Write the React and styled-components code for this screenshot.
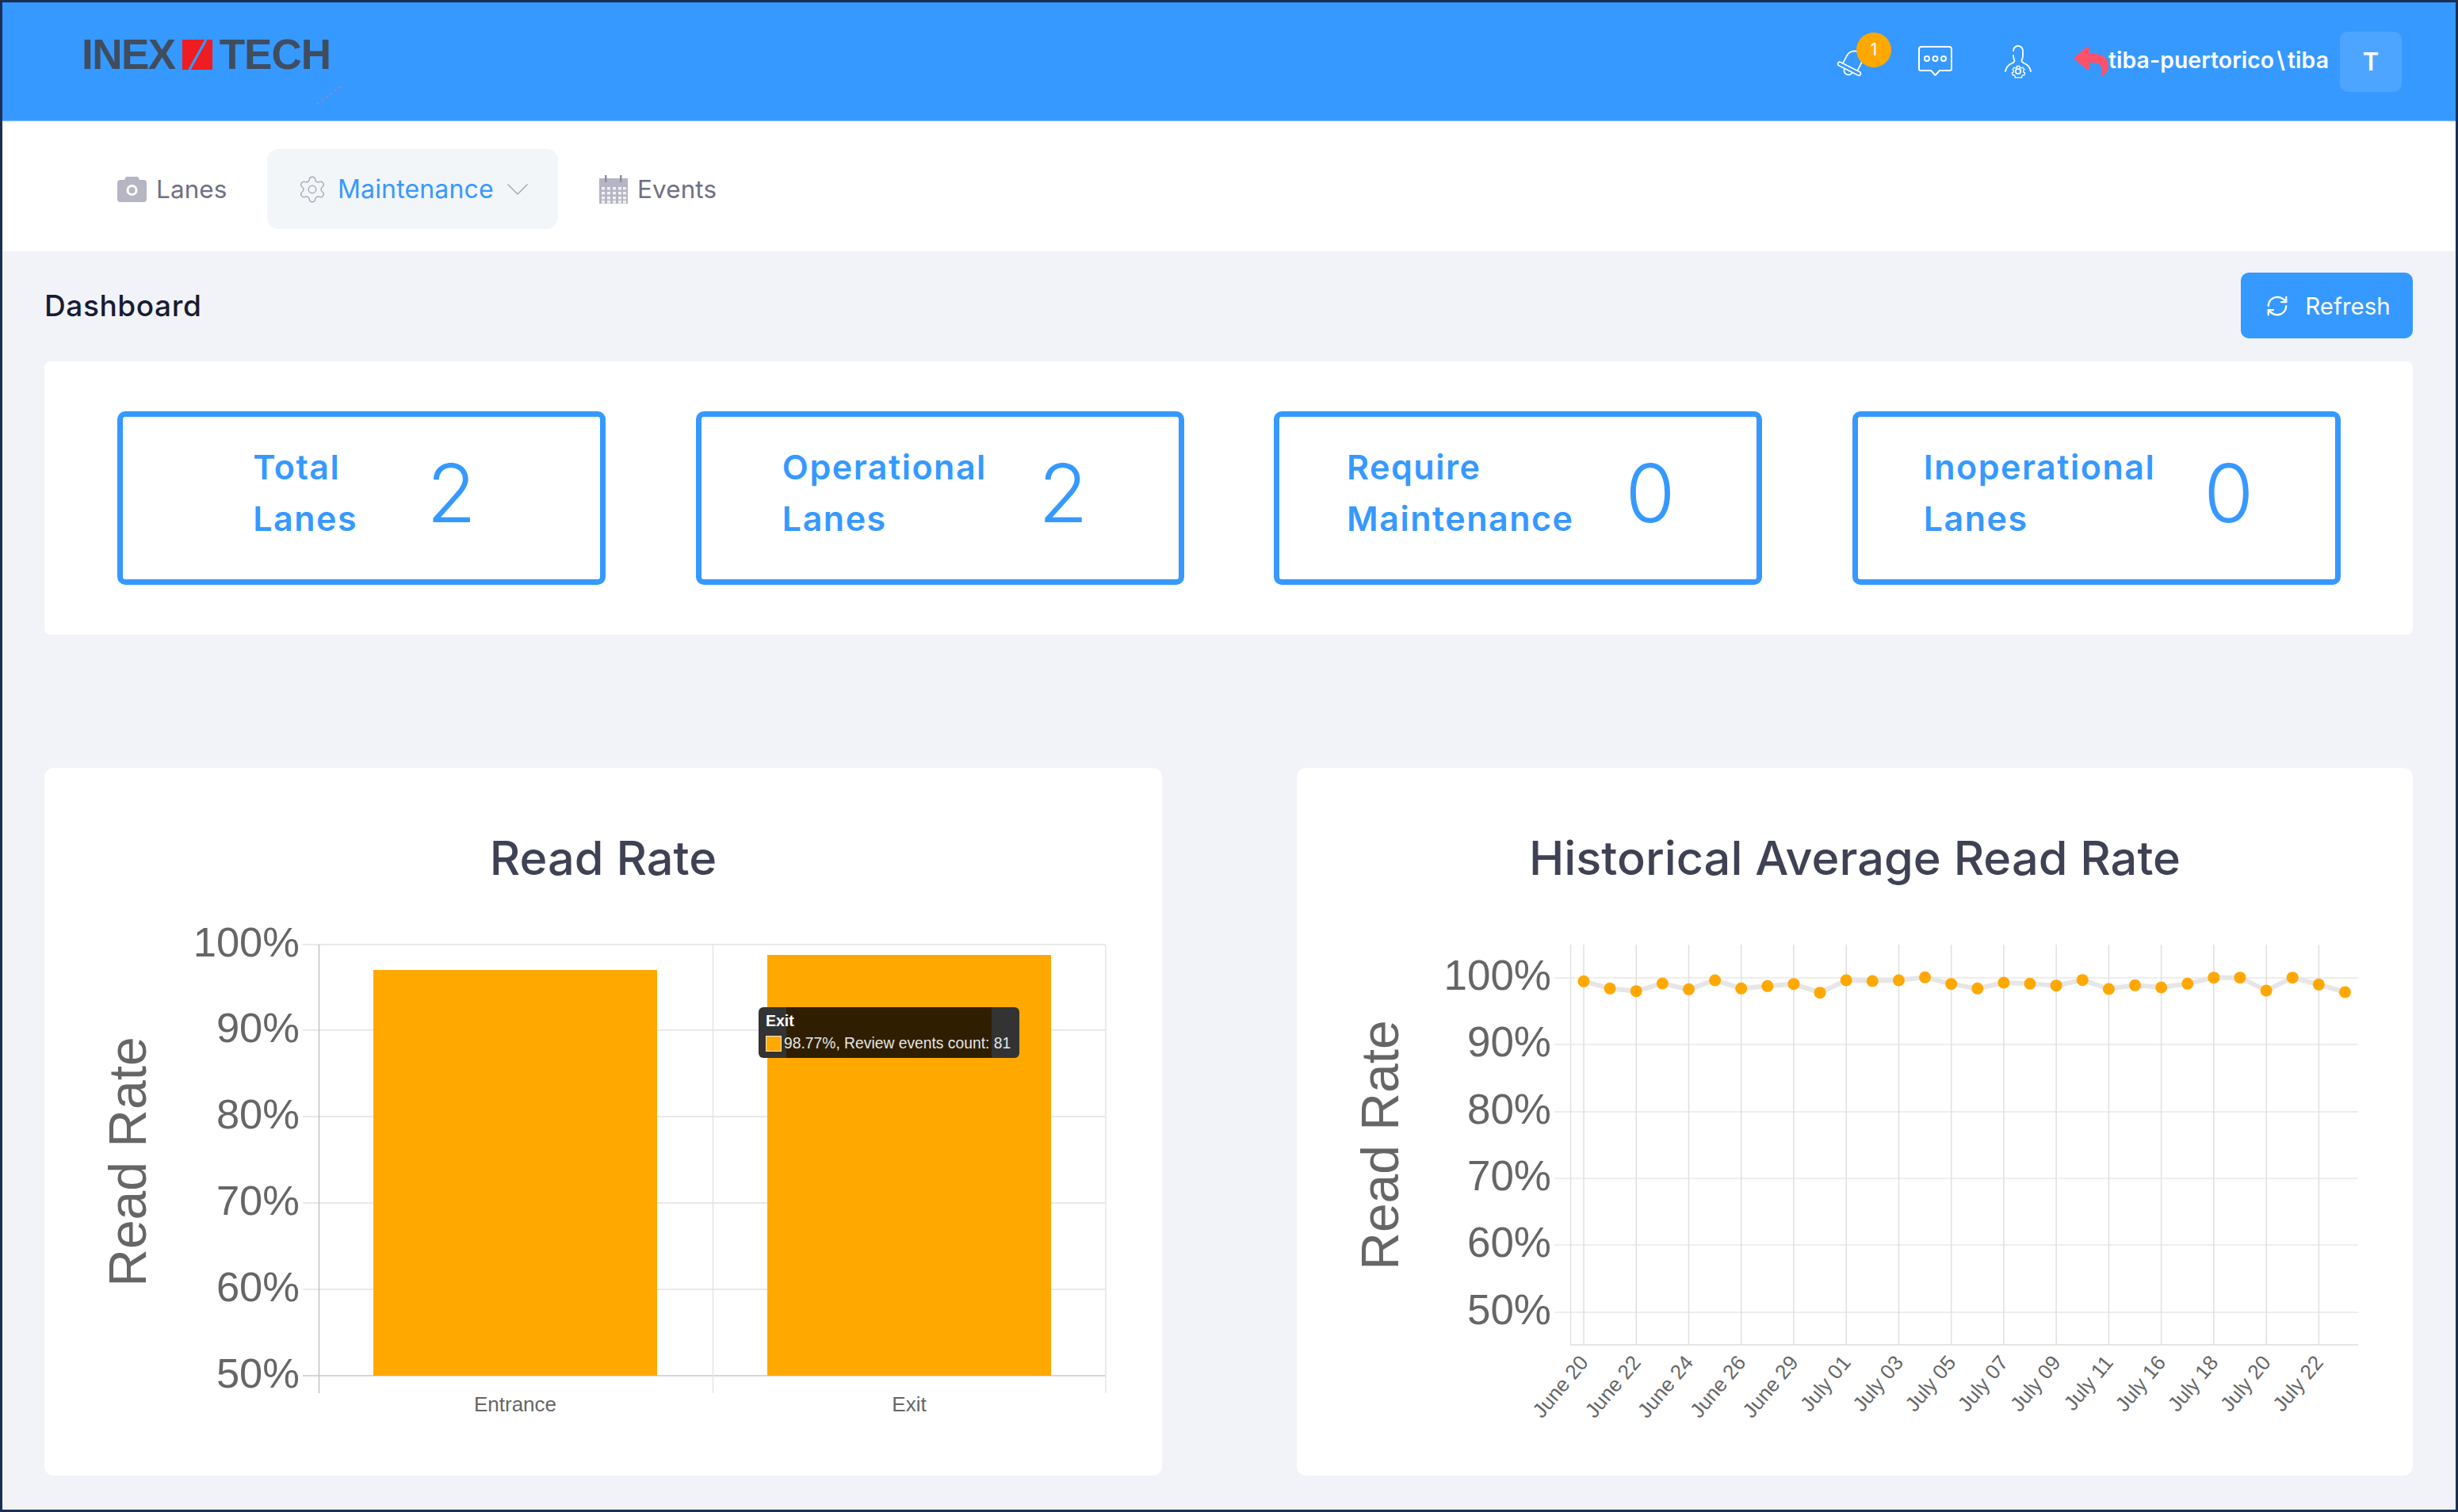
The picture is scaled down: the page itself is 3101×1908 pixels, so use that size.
import React from "react";
import styled, { createGlobalStyle } from "styled-components";
import { Settings, ChevronDown, RefreshCw } from "lucide-react";
import { FaReply } from "react-icons/fa";

const BLUE = "#3699ff";
const ORANGE = "#ffa800";
const SANS = `Inter, "Noto Sans", sans-serif`;
const ARIAL = `"Liberation Sans", Arial, sans-serif`;

const stats = [
  { lines: ["Total", "Lanes"], value: 2, gap: 87, left: 8, right: 0 },
  { lines: ["Operational", "Lanes"], value: 2, gap: 65, left: 0, right: 12 },
  { lines: ["Require", "Maintenance"], value: 0, gap: 65, left: 0, right: 18 },
  { lines: ["Inoperational", "Lanes"], value: 0, gap: 61, left: 0, right: 20 },
];

const barTicks = [
  { label: "100%", y: 1192 },
  { label: "90%", y: 1300 },
  { label: "80%", y: 1409 },
  { label: "70%", y: 1518 },
  { label: "60%", y: 1627 },
  { label: "50%", y: 1736 },
];

const lineTicks = [
  { label: "100%", y: 1234 },
  { label: "90%", y: 1318 },
  { label: "80%", y: 1403 },
  { label: "70%", y: 1487 },
  { label: "60%", y: 1571 },
  { label: "50%", y: 1656 },
];

// y of every point, read off the reference (page px - 1180) * 3
const pointOffsets = [
  175, 202, 212, 183, 205, 171, 202, 193, 185, 218, 171, 174, 171, 160, 185, 202,
  180, 184, 191, 170, 204, 190, 198, 184, 161, 161, 210, 161, 187, 216,
];
const points = pointOffsets.map((v, i) => ({ x: 1998 + i * 33.12, y: 1180 + v / 3 }));

const dates = [
  "June 20", "June 22", "June 24", "June 26", "June 29", "July 01", "July 03", "July 05",
  "July 07", "July 09", "July 11", "July 16", "July 18", "July 20", "July 22",
];

const GlobalStyle = createGlobalStyle`
  html, body { margin: 0; padding: 0; background: #f2f3f8; }
  * { box-sizing: border-box; }
`;

const Page = styled.div`
  width: 3101px;
  height: 1908px;
  border: 3px solid #1a2f55;
  background: #f2f3f8;
  font-family: ${SANS};
  overflow: hidden;
`;

const Header = styled.header`
  height: 149px;
  background: ${BLUE};
  display: flex;
  align-items: center;
  justify-content: space-between;
  padding: 0 68px 0 100px;
`;

const Logo = styled.div`
  position: relative;
  display: flex;
  align-items: center;
  height: 38px;
  margin-top: -17px;
  font-family: ${ARIAL};
  font-size: 53px;
  font-weight: 700;
  color: #3f4d5e;
`;

const LogoWord = styled.span`
  letter-spacing: ${(p) => p.$spacing}px;
  line-height: 38px;
`;

const LogoMark = styled.svg`
  width: 38px;
  height: 38px;
  margin: 0 9px 0 9px;
`;

const LogoSpeck = styled.svg`
  position: absolute;
  left: 297px;
  top: 57px;
  width: 34px;
  height: 24px;
`;

const HeaderRight = styled.div`
  display: flex;
  align-items: center;
`;

const IconSlot = styled.div`
  position: relative;
  display: flex;
  width: ${(p) => p.$w}px;
  height: 44px;
  margin-right: ${(p) => p.$mr}px;
  align-items: center;
  justify-content: center;
  color: #fff;
`;

const Badge = styled.span`
  position: absolute;
  left: 25px;
  top: -15px;
  width: 44px;
  height: 44px;
  border-radius: 50%;
  background: ${ORANGE};
  color: #fff;
  font-size: 21px;
  font-weight: 400;
  display: flex;
  align-items: center;
  justify-content: center;
`;

const UserName = styled.span`
  color: #fff;
  font-size: 28.3px;
  font-weight: 600;
  letter-spacing: 0.1px;
  margin: -4px 14px 0 0;
  white-space: nowrap;
`;

const Slash = styled.span`
  margin: 0 3px;
`;

const Avatar = styled.div`
  width: 78px;
  height: 76px;
  border-radius: 10px;
  background: rgba(255, 255, 255, 0.12);
  color: #fff;
  font-size: 31px;
  font-weight: 600;
  display: flex;
  align-items: center;
  justify-content: center;
`;

const Nav = styled.nav`
  height: 165px;
  background: #fff;
  display: flex;
  align-items: flex-start;
  padding: 35px 0 0 145px;
  border-top: 1px solid #7dbbff;
`;

const NavItem = styled.div`
  height: 101px;
  display: flex;
  align-items: center;
  gap: ${(p) => (p.$active ? 13 : 12)}px;
  width: ${(p) => p.$w}px;
  margin-right: ${(p) => p.$mr}px;
  padding-left: ${(p) => p.$pl}px;
  border-radius: 14px;
  background: ${(p) => (p.$active ? "#f3f6f9" : "transparent")};
  color: ${(p) => (p.$active ? BLUE : "#6f6f85")};
  font-size: ${(p) => (p.$active ? 32 : 31.4)}px;
  letter-spacing: 0.15px;
`;

const Chevron = styled(ChevronDown)`
  flex-shrink: 0;
  margin-left: -7px;
`;

const Content = styled.main`
  padding: 27px 54px 0 53px;
`;

const TitleRow = styled.div`
  display: flex;
  align-items: center;
  justify-content: space-between;
  height: 83px;
  margin-bottom: 29px;
`;

const PageTitle = styled.h1`
  margin: 0;
  font-size: 37px;
  font-weight: 500;
  letter-spacing: 0.6px;
  color: #181c32;
`;

const RefreshButton = styled.button`
  width: 217px;
  height: 83px;
  border: 0;
  border-radius: 10px;
  background: ${BLUE};
  color: #fff;
  font-family: ${SANS};
  font-size: 29.5px;
  display: flex;
  align-items: center;
  justify-content: center;
  gap: 20px;
  padding: 0 0 0 3px;
`;

const StatsCard = styled.section`
  height: 345px;
  background: #fff;
  border-radius: 8px;
  padding: 0 91px 0 92px;
  display: flex;
  align-items: center;
  justify-content: space-between;
`;

const StatBox = styled.div`
  width: 616px;
  height: 219px;
  border: 7px solid ${BLUE};
  border-radius: 10px;
  color: ${BLUE};
  display: flex;
  align-items: center;
  justify-content: center;
  gap: ${(p) => p.$gap}px;
  padding: 0 ${(p) => p.$right}px 14px ${(p) => p.$left}px;
`;

const StatLabel = styled.div`
  font-size: 43px;
  font-weight: 600;
  letter-spacing: 1.5px;
  line-height: 65px;
`;

const StatValue = styled.div`
  font-size: 102px;
  font-weight: 300;
  line-height: 1;
`;

const ChartGrid = styled.section`
  display: grid;
  grid-template-columns: 1410px 1408px;
  justify-content: space-between;
  margin-top: 168px;
`;

const ChartCard = styled.div`
  position: relative;
  height: 893px;
  background: #fff;
  border-radius: 12px;
  padding-top: 73px;
  display: flex;
  flex-direction: column;
  align-items: center;
`;

const ChartTitle = styled.h2`
  margin: 0 0 18px;
  height: 80px;
  line-height: 80px;
  font-size: 59.5px;
  font-weight: 500;
  color: #3f4254;
`;

const ChartSvg = styled.svg`
  display: block;
  flex-shrink: 0;
  width: 100%;
  height: 722px;
  font-family: ${ARIAL};
`;

const Tooltip = styled.div`
  position: absolute;
  left: 901px;
  top: 302px;
  width: 329px;
  height: 64px;
  border-radius: 6px;
  background: linear-gradient(
    to right,
    #333 35px,
    #2f1f00 35px,
    #2f1f00 294px,
    #333 294px
  );
  font-family: ${ARIAL};
  color: #e6e6e6;
  padding: 5px 0 0 9px;
`;

const TooltipTitle = styled.div`
  font-size: 19.5px;
  font-weight: 700;
  line-height: 24px;
  color: #fff;
`;

const TooltipRow = styled.div`
  display: flex;
  align-items: center;
  font-size: 19.3px;
  line-height: 30px;
  margin-top: 2px;
  white-space: nowrap;
`;

const Swatch = styled.span`
  width: 20px;
  height: 20px;
  background: ${ORANGE};
  border: 1.5px solid #e6e6e6;
  margin-right: 3px;
`;

function LogoMarkSvg() {
  return (
    <LogoMark viewBox="0 0 38 38">
      <rect width="38" height="38" fill="#ef1c22" />
      <path d="M30 0 L9 38" stroke={BLUE} strokeWidth="3.2" />
    </LogoMark>
  );
}

function BellSvg() {
  return (
    <svg width="44" height="44" viewBox="0 0 44 44" fill="none" stroke="#fff" strokeWidth="1.8" strokeLinejoin="round">
      <g transform="rotate(27 22 22)">
        <path d="M11 30V18a11 11 0 0 1 22 0v12" />
        <rect x="5" y="30" width="34" height="5" rx="2.500" />
        <path d="M16 35a6 6 0 0 0 12 0" />
      </g>
    </svg>
  );
}

function ChatIcon() {
  return (
    <svg width="43" height="40" viewBox="0 0 43 40" fill="none" stroke="#fff" strokeWidth="2" strokeLinejoin="round">
      <path d="M4 1h35a3 3 0 0 1 3 3v25a2 2 0 0 1-2 2H27l-5.500 6-5.500-6H3a2 2 0 0 1-2-2V4a3 3 0 0 1 3-3z" />
      <circle cx="11" cy="16" r="3" />
      <circle cx="21.500" cy="16" r="3" />
      <circle cx="32" cy="16" r="3" />
    </svg>
  );
}

function PersonGearIcon() {
  return (
    <svg width="34" height="44" viewBox="0 0 34 44" fill="none" stroke="#fff" strokeWidth="1.8" strokeLinecap="round" strokeLinejoin="round">
      <path d="M11 8a6 6 0 0 1 12 0v6c0 4-1.500 5-1.500 7 0 1.500 2 2 5.500 4 3 1.800 5 4 6 9" />
      <path d="M11 14c0 4 1.500 5 1.500 7 0 1.500-2 2-5.500 4-3 1.800-5 4-6 9" />
      <path d="M14.500 25h5l.8 2.500 2.500 1 2.400-1.200 2.800 3.500-1.800 2.100.4 2.600 2.400 1.200-1 4-2.700-.1-1.800 1.900.2 2.500h-12l.2-2.500-1.800-1.900-2.700.1-1-4 2.400-1.200.4-2.600-1.800-2.100 2.800-3.500 2.400 1.200 2.500-1z" transform="translate(17 34) scale(.72) translate(-17 -34)" />
      <circle cx="17" cy="34" r="3.200" />
    </svg>
  );
}

function CameraIcon() {
  return (
    <svg width="37" height="32" viewBox="0 0 37 32">
      <path fill="#b5b5c3" d="M11 0h15l2 4h5a4 4 0 0 1 4 4v20a4 4 0 0 1-4 4H4a4 4 0 0 1-4-4V8a4 4 0 0 1 4-4h5z" />
      <circle cx="18.500" cy="17" r="7" fill="#fff" />
      <circle cx="18.500" cy="17" r="4" fill="#b5b5c3" />
    </svg>
  );
}

function CalendarIcon() {
  const cols = [3, 10, 17, 24, 30];
  const rows = [15, 21, 27, 32];
  return (
    <svg width="36" height="36" viewBox="0 0 36 36">
      <rect y="4" width="36" height="32" fill="#b5b5c3" />
      <rect x="7" y="0" width="2.500" height="9" fill="#8e8ea0" />
      <rect x="26" y="0" width="2.500" height="9" fill="#8e8ea0" />
      {rows.map((y) =>
        cols.map((x) => <rect key={`${x}-${y}`} x={x} y={y} width="4" height="3.500" fill="#f1f1f5" />)
      )}
    </svg>
  );
}

function BarChart() {
  return (
    <ChartSvg viewBox="56 1140 1410 722">
      {barTicks.map((t) => (
        <g key={t.label}>
          <line x1="382" x2="1395" y1={t.y} y2={t.y} stroke="#e9e9e9" strokeWidth="2" />
          <text x="378" y={t.y + 15} textAnchor="end" fontSize="52.5" fill="#666">{t.label}</text>
        </g>
      ))}
      <line x1="382" x2="1395" y1="1736" y2="1736" stroke="#d6d6d6" strokeWidth="2" />
      <line x1="402.500" x2="402.500" y1="1192" y2="1758" stroke="#c4c4c4" strokeWidth="1.500" />
      <line x1="899.500" x2="899.500" y1="1192" y2="1758" stroke="#e4e4e4" strokeWidth="1.500" />
      <line x1="1395" x2="1395" y1="1192" y2="1758" stroke="#e4e4e4" strokeWidth="1.500" />
      <rect x="471" y="1224" width="358" height="512" fill={ORANGE} />
      <rect x="968" y="1205" width="358" height="531" fill={ORANGE} />
      <text x="650" y="1781" textAnchor="middle" fontSize="26" fill="#666">Entrance</text>
      <text x="1147" y="1781" textAnchor="middle" fontSize="26" fill="#666">Exit</text>
      <text transform="translate(184 1466) rotate(-90)" textAnchor="middle" fontSize="66" fill="#666">Read Rate</text>
    </ChartSvg>
  );
}

function LineChart() {
  const gridXs = dates.map((_, i) => 1998 + i * 66.24);
  const line = points.map((p) => `${p.x},${p.y}`).join(" ");
  return (
    <ChartSvg viewBox="1636 1140 1408 722">
      {lineTicks.map((t) => (
        <g key={t.label}>
          <line x1="1961" x2="2975" y1={t.y} y2={t.y} stroke="#eeeeee" strokeWidth="2" />
          <text x="1957" y={t.y + 15} textAnchor="end" fontSize="53" fill="#666">{t.label}</text>
        </g>
      ))}
      <line x1="1981.500" x2="1981.500" y1="1192" y2="1697" stroke="#e2e2e2" strokeWidth="1.500" />
      <line x1="1981" x2="2975" y1="1697" y2="1697" stroke="#e6e6e6" strokeWidth="2" />
      {gridXs.map((x) => (
        <line key={x} x1={x} x2={x} y1="1192" y2="1697" stroke="#e0e0e0" strokeWidth="1.500" />
      ))}
      <polyline points={line} fill="none" stroke="#e6e6e6" strokeWidth="6" />
      {points.map((p) => (
        <circle key={p.x} cx={p.x} cy={p.y} r="7.500" fill={ORANGE} />
      ))}
      {dates.map((d, i) => (
        <text
          key={d}
          transform={`translate(${gridXs[i] + 7} 1720) rotate(-50)`}
          textAnchor="end"
          fontSize="26"
          fill="#666"
        >
          {d}
        </text>
      ))}
      <text transform="translate(1764 1445) rotate(-90)" textAnchor="middle" fontSize="66" fill="#666">Read Rate</text>
    </ChartSvg>
  );
}

export default function App() {
  return (
    <Page>
      <GlobalStyle />
      <Header>
        <Logo>
          <LogoWord $spacing={-1.5}>INEX</LogoWord>
          <LogoMarkSvg />
          <LogoWord $spacing={-1}>TECH</LogoWord>
          <LogoSpeck viewBox="0 0 34 24">
            <path d="M0 24 L34 0" stroke="#e0788c" strokeWidth="1.500" strokeDasharray="2 5" />
          </LogoSpeck>
        </Logo>
        <HeaderRight>
          <IconSlot $w={41} $mr={62}>
            <BellSvg />
            <Badge>1</Badge>
          </IconSlot>
          <IconSlot $w={43} $mr={66}>
            <ChatIcon />
          </IconSlot>
          <IconSlot $w={34} $mr={54}>
            <PersonGearIcon />
          </IconSlot>
          <IconSlot $w={43} $mr={0}>
            <FaReply size={43} color="#ff5269" />
          </IconSlot>
          <UserName>
            tiba-puertorico<Slash>\</Slash>tiba
          </UserName>
          <Avatar>T</Avatar>
        </HeaderRight>
      </Header>

      <Nav>
        <NavItem $w={189} $mr={0} $pl={0}>
          <CameraIcon />
          Lanes
        </NavItem>
        <NavItem $active $w={367} $mr={52} $pl={38}>
          <Settings size={38} strokeWidth={0.9} color="#a9a9b8" />
          Maintenance
          <Chevron size={48} strokeWidth={0.7} color="#a1a1b0" />
        </NavItem>
        <NavItem $w={170} $mr={0} $pl={0}>
          <CalendarIcon />
          Events
        </NavItem>
      </Nav>

      <Content>
        <TitleRow>
          <PageTitle>Dashboard</PageTitle>
          <RefreshButton>
            <RefreshCw size={30} strokeWidth={1.8} />
            Refresh
          </RefreshButton>
        </TitleRow>

        <StatsCard>
          {stats.map((s) => (
            <StatBox key={s.lines[0]} $gap={s.gap} $left={s.left} $right={s.right}>
              <StatLabel>
                {s.lines[0]}
                <br />
                {s.lines[1]}
              </StatLabel>
              <StatValue>{s.value}</StatValue>
            </StatBox>
          ))}
        </StatsCard>

        <ChartGrid>
          <ChartCard>
            <ChartTitle>Read Rate</ChartTitle>
            <BarChart />
            <Tooltip>
              <TooltipTitle>Exit</TooltipTitle>
              <TooltipRow>
                <Swatch />
                98.77%, Review events count: 81
              </TooltipRow>
            </Tooltip>
          </ChartCard>
          <ChartCard>
            <ChartTitle>Historical Average Read Rate</ChartTitle>
            <LineChart />
          </ChartCard>
        </ChartGrid>
      </Content>
    </Page>
  );
}
